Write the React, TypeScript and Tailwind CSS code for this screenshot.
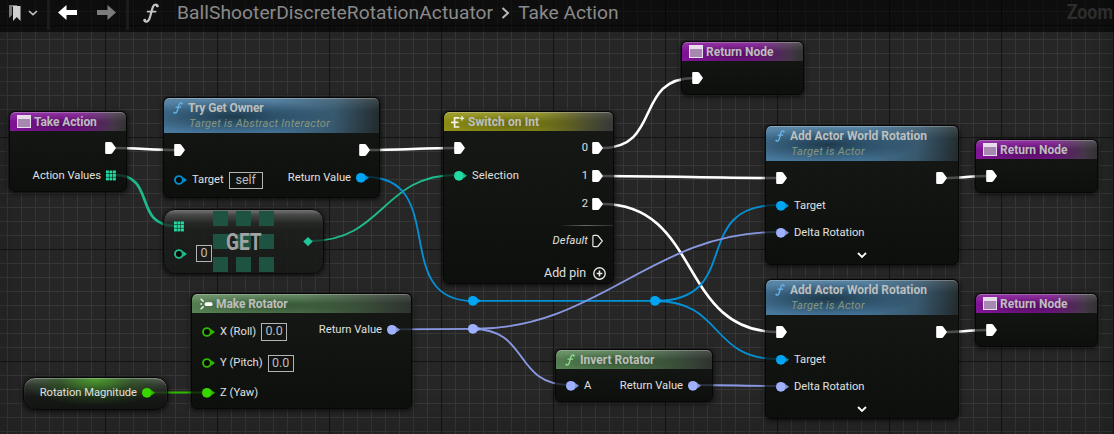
import type { ReactNode } from 'react';

const BLUE = '#00a6f4';
const TEAL = '#22dba3';
const LIME = '#38d500';
const VIOLET = '#9fb0fe';

type PinKind = 'exec' | 'exec-empty' | 'dot' | 'ring' | 'array' | 'diamond';

function Pin({ kind, color = '#ffffff' }: { kind: PinKind; color?: string }) {
  return (
    <svg width="14" height="14" viewBox="0 0 14 14" className="shrink-0" fill={color}>
      {kind === 'exec' && <path d="M0.2 2Q0.2 1 1.2 1H5.6Q6.5 1 7.2 1.8L11 7L7.2 12.2Q6.5 13 5.6 13H1.2Q0.2 13 0.2 12Z" />}
      {kind === 'exec-empty' && (
        <path d="M0.9 2.3Q0.9 1.4 1.8 1.4H5Q5.7 1.4 6.2 2L10.3 7L6.2 12Q5.7 12.6 5 12.6H1.8Q0.9 12.6 0.9 11.7Z" fill="none" stroke="#e8e8e8" strokeWidth="1.2" />
      )}
      {kind === 'dot' && (
        <>
          <circle cx="4.9" cy="6.8" r="4.9" />
          <path d="M9.3 4L13 6.8L9.3 9.6Z" opacity=".8" />
        </>
      )}
      {kind === 'ring' && (
        <g opacity=".85">
          <circle cx="4.9" cy="7" r="3.9" fill="#050807" stroke={color} strokeWidth="1.9" />
          <path d="M9.2 4.3L13 7L9.2 9.7Z" />
        </g>
      )}
      {kind === 'array' &&
        [0, 1, 2].map((r) => [0, 1, 2].map((c) => <rect key={`${r}${c}`} x={c * 3.5} y={1.5 + r * 3.5} width="2.9" height="2.9" />))}
      {kind === 'diamond' && <path d="M5 2L9.8 6.6L5 11.2L0.2 6.6Z" />}
    </svg>
  );
}

function WindowIcon() {
  return (
    <svg width="14" height="13" viewBox="0 0 14 13" className="shrink-0">
      <rect width="14" height="13" fill="#e9dcec" />
      <rect x="1" y="4" width="12" height="8" fill="#a688b0" />
    </svg>
  );
}

function FuncIcon({ color, w = 10, h = 12 }: { color: string; w?: number; h?: number }) {
  return (
    <svg width={w} height={h} viewBox="0 0 16 20" className="shrink-0" fill="none" stroke={color} strokeLinecap="round">
      <path d="M14.6 3.2C14 1 11.2 .9 10 3.6C8.7 6.8 7.6 13.2 6.2 16.2C5 18.9 2.2 19.4 1.4 17.4" strokeWidth="2.2" />
      <path d="M4.6 8.6H12.6" strokeWidth="1.8" />
      <circle cx="14.2" cy="2.9" r=".7" strokeWidth="1.3" />
      <circle cx="1.8" cy="17.2" r=".7" strokeWidth="1.3" />
    </svg>
  );
}

function SwitchIcon() {
  return (
    <svg width="14" height="12" viewBox="0 0 14 12" className="shrink-0" stroke="#f2f2e4" strokeWidth="1.7" fill="none">
      <path d="M0 6.3H7.5M8.3 1.8H3.6V11H8.3" />
      <path d="M11 0V4.6M8.8 2.3H13.2" strokeWidth="1.3" />
    </svg>
  );
}

function MakeIcon() {
  return (
    <svg width="13" height="12" viewBox="0 0 13 12" className="shrink-0">
      <path d="M.6 .8L3.6 3.6M.6 11.2L3.6 8.4M.4 6H2" stroke="#eef2ee" strokeWidth="1.5" />
      <rect x="4.6" y="4.3" width="8" height="3.6" rx="1.6" fill="#fff" />
    </svg>
  );
}

function Label({ children, className = '', size = 'text-[11.2px]' }: { children: ReactNode; className?: string; size?: string }) {
  return <span className={`whitespace-nowrap leading-[14px] text-[#e0e0e0] ${size} ${className}`}>{children}</span>;
}

function ValueBox({ children, className }: { children: ReactNode; className: string }) {
  return (
    <span className={`flex shrink-0 items-center justify-center border border-[#b4b4b4] text-[12.5px] leading-none text-[#bdbdbd] ${className}`}>
      {children}
    </span>
  );
}

function Row({ className, children }: { className: string; children: ReactNode }) {
  return <div className={`flex shrink-0 items-center ${className}`}>{children}</div>;
}

type NodeProps = {
  place: string;
  tint: string;
  icon: ReactNode;
  title: string;
  titleClass?: string;
  subtitle?: string;
  subtitleClass?: string;
  left?: ReactNode;
  right?: ReactNode;
};

function GraphNode({ place, tint, icon, title, titleClass = '', subtitle, subtitleClass = '', left, right }: NodeProps) {
  return (
    <section className={`absolute flex flex-col overflow-hidden rounded-[6px] border border-[#060706] bg-[linear-gradient(#151815f2,#0b0e0bf2)] shadow-[0_1px_4px_1px_rgba(0,0,0,0.6)] ${place}`}>
      <header className={`flex shrink-0 flex-col rounded-t-[5px] border-t border-white/35 ${subtitle ? 'h-[35px]' : 'h-[19px]'} ${tint}`}>
        <div className="flex h-[17px] shrink-0 items-center pl-[7px]">
          {icon}
          <h2 className={`whitespace-nowrap text-[12px] leading-[14px] font-bold text-[#bdbfbd] ${titleClass}`}>{title}</h2>
        </div>
        {subtitle && <p className={`mt-px pl-[25px] text-[11px] leading-[14px] whitespace-nowrap text-[#86977f] italic ${subtitleClass}`}>{subtitle}</p>}
      </header>
      <div className="flex flex-1 justify-between">
        <div className="flex flex-col items-start">{left}</div>
        <div className="flex flex-col items-end">{right}</div>
      </div>
    </section>
  );
}

const PURPLE = 'bg-[linear-gradient(#ffffff1f,transparent_45%),radial-gradient(ellipse_50%_60%_at_45%_65%,#3c0a4699,transparent),linear-gradient(100deg,#83159a_0%,#7c168f_60%,#46384a_88%,#303230_100%)]';
const STEEL = 'bg-[linear-gradient(#ffffff1c,transparent_35%),radial-gradient(ellipse_48%_50%_at_32%_52%,#152c3acc,transparent),linear-gradient(100deg,#48789c_0%,#437396_50%,#38596f_78%,#242e31_98%)]';
const OLIVE = 'bg-[linear-gradient(#ffffff18,transparent_45%),radial-gradient(ellipse_50%_60%_at_42%_60%,#4e4e0b99,transparent),linear-gradient(100deg,#939316_0%,#8b8c1b_55%,#50522e_82%,#383a38_98%)]';
const GREEN = 'bg-[linear-gradient(#ffffff1f,transparent_45%),radial-gradient(ellipse_50%_60%_at_40%_60%,#26402699,transparent),linear-gradient(100deg,#5a8657_0%,#4f764d_50%,#384838_82%,#2e322e_100%)]';

function ReturnNode({ place }: { place: string }) {
  return (
    <GraphNode place={`h-[54px] w-[123px] ${place}`} tint={PURPLE} icon={<WindowIcon />} title="Return Node" titleClass="ml-[3px]"
      left={<Row className="mt-[10px] h-[14px] pl-[10px]"><Pin kind="exec" /></Row>} />
  );
}

function AddRotationNode({ place }: { place: string }) {
  return (
    <GraphNode place={`h-[140px] w-[194px] ${place}`} tint={STEEL} icon={<span className="ml-[2px] flex"><FuncIcon color="#67b7ea" /></span>} title="Add Actor World Rotation" titleClass="ml-[5px]"
      subtitle="Target is Actor" subtitleClass="tracking-[0.3px]"
      left={
        <>
          <Row className="mt-[10px] h-[14px] pl-[10px]"><Pin kind="exec" /></Row>
          <Row className="mt-[13px] h-[14px] gap-[4px] pl-[10px] pt-px"><Pin kind="dot" color={BLUE} /><Label>Target</Label></Row>
          <Row className="mt-[13px] h-[14px] gap-[4px] pl-[10px] pt-px"><Pin kind="dot" color={VIOLET} /><Label>Delta Rotation</Label></Row>
          <Row className="mt-[11px] h-[10px] pl-[91px]">
            <svg width="10" height="8" viewBox="0 0 10 8" fill="none" stroke="#fff" strokeWidth="1.8"><path d="M1 2L5 6L9 2" /></svg>
          </Row>
        </>
      }
      right={<Row className="mt-[10px] h-[14px] pr-[8px]"><Pin kind="exec" /></Row>} />
  );
}

const wires: { d: string; color: string; width: number }[] = [
  { d: 'M115 148C135 148 155 150 176 150', color: '#ffffff', width: 2.6 },
  { d: 'M368 150C400 150 425 148 456 148', color: '#ffffff', width: 2.6 },
  { d: 'M602 148C662 148 634 78 694 78', color: '#ffffff', width: 2.5 },
  { d: 'M602 176C660 176 720 178 778 178', color: '#ffffff', width: 2.6 },
  { d: 'M602 204C702 204 678 332 778 332', color: '#ffffff', width: 2.5 },
  { d: 'M945 178C960 178 973 176 988 176', color: '#ffffff', width: 2.6 },
  { d: 'M945 332C960 332 973 330 988 330', color: '#ffffff', width: 2.6 },
  { d: 'M115 175C157 175 132 226 176 226', color: '#1fb98b', width: 2.6 },
  { d: 'M310 241C384 241 382 175 456 175', color: '#1fb98b', width: 1.8 },
  { d: 'M366 177C450 177 389 301 473 301', color: '#0590d4', width: 1.8 },
  { d: 'M473 300.8H655', color: '#0590d4', width: 1.8 },
  { d: 'M655 301C745 301 688 205 778 205', color: '#0590d4', width: 1.8 },
  { d: 'M655 301C724 301 709 359 778 359', color: '#0590d4', width: 1.8 },
  { d: 'M397 329.3L473 328.8', color: '#8998e0', width: 1.8 },
  { d: 'M473 329C600 329 651 232 778 232', color: '#8998e0', width: 1.8 },
  { d: 'M473 329C530 329 513 385 570 385', color: '#8998e0', width: 1.8 },
  { d: 'M698 385C725 385 751 386 778 386', color: '#8998e0', width: 1.8 },
  { d: 'M152 392.5H204', color: '#2fba00', width: 1.9 },
];

function Wires({ faint = false }: { faint?: boolean }) {
  return (
    <svg width="1114" height="434" className={`pointer-events-none absolute inset-0 ${faint ? 'opacity-20' : ''}`} fill="none">
      {wires.map((w) => <path key={w.d} d={w.d} stroke={w.color} strokeWidth={w.width} />)}
    </svg>
  );
}

function Reroute({ place, color }: { place: string; color: string }) {
  return <span className={`absolute flex ${place}`}><Pin kind="dot" color={color} /></span>;
}

export default function App() {
  return (
    <main className="relative h-[434px] w-[1114px] overflow-hidden bg-[#262626] font-[Roboto,sans-serif]">
      <svg width="1114" height="434" className="absolute inset-0">
        <defs>
          <pattern id="minor" x="7" y="11" width="14" height="14" patternUnits="userSpaceOnUse">
            <path d="M0 .5H14M.5 0V14" stroke="#363636" />
          </pattern>
          <pattern id="major" x="105" y="25" width="112" height="112" patternUnits="userSpaceOnUse">
            <path d="M0 .5H112M.5 0V112" stroke="#141414" />
          </pattern>
        </defs>
        <rect width="1114" height="434" fill="url(#minor)" />
        <rect width="1114" height="434" fill="url(#major)" />
      </svg>
      <div className="absolute inset-0 shadow-[inset_0_0_36px_rgba(0,0,0,0.22)]" />

      <Wires />

      <GraphNode place="left-[9px] top-[111px] h-[81px] w-[118px]" tint={PURPLE} icon={<WindowIcon />} title="Take Action" titleClass="ml-[3px] tracking-[-0.1px]"
        right={
          <>
            <Row className="mt-[10px] h-[14px] pr-[7px]"><Pin kind="exec" /></Row>
            <Row className="mt-[14px] h-[14px] gap-[5px] pr-[6px]"><Label>Action Values</Label><Pin kind="array" color={TEAL} /></Row>
          </>
        } />

      <GraphNode place="left-[163px] top-[97px] h-[101px] w-[217px]" tint={STEEL} icon={<span className="ml-[2px] flex"><FuncIcon color="#67b7ea" /></span>} title="Try Get Owner" titleClass="ml-[5px] tracking-[-0.1px]"
        subtitle="Target is Abstract Interactor" subtitleClass="tracking-[0.3px]"
        left={
          <>
            <Row className="mt-[10px] h-[14px] pl-[10px]"><Pin kind="exec" /></Row>
            <Row className="mt-[14px] h-[18px] pl-[10px]"><Pin kind="ring" color={BLUE} /><Label className="ml-[4px]">Target</Label><ValueBox className="ml-[5px] h-[17px] w-[34px]">self</ValueBox></Row>
          </>
        }
        right={
          <>
            <Row className="mt-[10px] h-[14px] pr-[6px]"><Pin kind="exec" /></Row>
            <Row className="mt-[14px] h-[14px] gap-[5px] pr-[9px]"><Label>Return Value</Label><Pin kind="dot" color={BLUE} /></Row>
          </>
        } />

      <section className="absolute top-[209px] left-[163px] h-[65px] w-[161px] overflow-hidden rounded-[12px] border border-[#0a0a0a] bg-[linear-gradient(#747474_0,#454745_5px,#262826_13px,#1b1d1bd9_20px,#161816d9)] shadow-[0_1px_4px_1px_rgba(0,0,0,0.6)]">
        <div className="absolute top-[1px] left-[49px] grid grid-cols-3 gap-[8px]">
          {[0, 1, 2, 3, 4, 5, 6, 7, 8].map((i) => <i key={i} className="size-[15px] bg-[#1f5341]" />)}
        </div>
        <div className="relative flex h-full items-center justify-between">
          <div className="flex flex-col pb-[2px] pl-[10px]">
            <Row className="h-[14px]"><Pin kind="array" color={TEAL} /></Row>
            <Row className="mt-[12px] h-[16px]"><Pin kind="ring" color={TEAL} /><ValueBox className="ml-[8px] h-[17px] w-[16px]">0</ValueBox></Row>
          </div>
          <strong className="absolute left-[62px] origin-left scale-x-[0.79] text-[24px] leading-none text-[#a3a3a3]">GET</strong>
          <Row className="pr-[6px]"><Pin kind="diamond" color="#22c597" /></Row>
        </div>
      </section>

      <GraphNode place="left-[443px] top-[111px] h-[173px] w-[171px]" tint={OLIVE} icon={<SwitchIcon />} title="Switch on Int" titleClass="ml-[3px] tracking-[0.08px]"
        left={
          <>
            <Row className="mt-[10px] h-[14px] pl-[10px]"><Pin kind="exec" /></Row>
            <Row className="mt-[14px] h-[14px] gap-[4px] pl-[10px]"><Pin kind="dot" color={TEAL} /><Label className="tracking-[0.1px]">Selection</Label></Row>
          </>
        }
        right={
          <>
            <Row className="mt-[10px] h-[14px] gap-[4px] pr-[7px]"><Label>0</Label><Pin kind="exec" /></Row>
            <Row className="mt-[14px] h-[14px] gap-[4px] pr-[7px]"><Label>1</Label><Pin kind="exec" /></Row>
            <Row className="mt-[14px] h-[14px] gap-[4px] pr-[7px]"><Label>2</Label><Pin kind="exec" /></Row>
            <div className="mt-[14px] h-px w-[54px] bg-gradient-to-r from-transparent via-[#6a6c6a] to-[#2a2c2a]" />
            <Row className="mt-[8px] h-[14px] gap-[4px] pr-[7px]"><Label className="tracking-[0.1px] italic">Default</Label><Pin kind="exec-empty" /></Row>
            <Row className="mt-[18px] h-[14px] gap-[7px] pr-[7px]">
              <Label size="text-[12.4px]">Add pin</Label>
              <svg width="13" height="13" viewBox="0 0 13 13" fill="none" stroke="#e8e8e8" strokeWidth="1.4"><circle cx="6.5" cy="6.5" r="5.7" /><path d="M3.6 6.5H9.4M6.5 3.6V9.4" strokeWidth="1.6" /></svg>
            </Row>
          </>
        } />

      <GraphNode place="left-[191px] top-[293px] h-[116px] w-[221px]" tint={GREEN} icon={<span className="ml-[1px] flex"><MakeIcon /></span>} title="Make Rotator" titleClass="ml-[3px] tracking-[-0.1px]"
        left={
          <>
            <Row className="mt-[9px] h-[18px] pl-[10px] pt-px"><Pin kind="ring" color={LIME} /><Label className="ml-[4px]">X (Roll)</Label><ValueBox className="ml-[5px] h-[18px] w-[26px]">0.0</ValueBox></Row>
            <Row className="mt-[14px] h-[18px] pl-[10px]"><Pin kind="ring" color={LIME} /><Label className="ml-[4px]">Y (Pitch)</Label><ValueBox className="ml-[5px] h-[17px] w-[26px]">0.0</ValueBox></Row>
            <Row className="mt-[13px] h-[14px] gap-[4px] pl-[10px] pt-px"><Pin kind="dot" color={LIME} /><Label>Z (Yaw)</Label></Row>
          </>
        }
        right={<Row className="mt-[10px] h-[14px] gap-[5px] pr-[10px]"><Label>Return Value</Label><Pin kind="dot" color={VIOLET} /></Row>} />

      <section className="absolute top-[377px] left-[23px] flex h-[33px] w-[145px] items-center justify-end gap-[5px] rounded-[12px] border border-[#070707] bg-[radial-gradient(ellipse_52%_85%_at_50%_5%,#4b9a2e_0,#2c5a1d99_50%,transparent),linear-gradient(#606260,#303230_25%,#171917_60%,#121412)] pr-[11px] pb-px shadow-[0_1px_4px_1px_rgba(0,0,0,0.6),inset_0_1px_1px_rgba(255,255,255,0.3)]">
        <Label className="tracking-[-0.03px]">Rotation Magnitude</Label><Pin kind="dot" color={LIME} />
      </section>

      <GraphNode place="left-[555px] top-[349px] h-[53px] w-[158px]" tint={GREEN} icon={<span className="ml-[2px] flex"><FuncIcon color="#8fe08c" /></span>} title="Invert Rotator" titleClass="ml-[5px]"
        left={<Row className="mt-[10px] h-[14px] gap-[4px] pl-[10px]"><Pin kind="dot" color={VIOLET} /><Label>A</Label></Row>}
        right={<Row className="mt-[10px] h-[14px] gap-[5px] pr-[10px]"><Label>Return Value</Label><Pin kind="dot" color={VIOLET} /></Row>} />

      <ReturnNode place="left-[681px] top-[41px]" />
      <AddRotationNode place="left-[765px] top-[125px]" />
      <AddRotationNode place="left-[765px] top-[279px]" />
      <ReturnNode place="left-[975px] top-[139px]" />
      <ReturnNode place="left-[975px] top-[293px]" />

      <Wires faint />
      <Reroute place="left-[468px] top-[294px]" color={BLUE} />
      <Reroute place="left-[650px] top-[294px]" color={BLUE} />
      <Reroute place="left-[468px] top-[322px]" color={VIOLET} />

      <nav className="relative flex h-[32px] items-start bg-black/60">
        <div className="flex h-[30px] w-[50px] items-center border-r-[3px] border-[#1c1c1c] pl-[9px]">
          <svg width="30" height="18" viewBox="0 0 30 18" className="-mt-[4px]">
            <path d="M0 1H8V3H3V11L0 14Z" fill="#777" />
            <path d="M4 2H11.5V17L7.75 13L4 17Z" fill="#d0d0d0" />
            <path d="M20 7L24 10.7L28 7" fill="none" stroke="#c0c0c0" strokeWidth="1.6" />
          </svg>
        </div>
        <div className="flex h-[30px] w-[79px] items-center gap-[20px] border-r-[3px] border-[#1c1c1c] pl-[8px]">
          <svg width="19" height="15" viewBox="0 0 19 15" className="-mt-[6px]" fill="#fff"><path d="M0 7.5L8.5 0V5H19V10H8.5V15Z" /></svg>
          <svg width="19" height="15" viewBox="0 0 19 15" className="-mt-[6px]" fill="#7c7c7c"><path d="M19 7.5L10.5 0V5H0V10H10.5V15Z" /></svg>
        </div>
        <div className="flex h-[26px] flex-1 items-center pl-[14px] text-[19.2px] text-[#8a8a8a]">
          <FuncIcon color="#c4c4c4" w={16} h={20} />
          <span className="ml-[18px] tracking-[0.06px]">BallShooterDiscreteRotationActuator</span>
          <svg width="9" height="12" viewBox="0 0 9 12" className="mx-[8px]" fill="none" stroke="#b8b8b8" strokeWidth="2"><path d="M1.5 1L7 6L1.5 11" /></svg>
          <span>Take Action</span>
        </div>
        <span className="mr-px origin-right scale-x-[0.89] text-[20px] leading-[24px] font-bold text-[#2d2d2d]">Zoom</span>
      </nav>
    </main>
  );
}
